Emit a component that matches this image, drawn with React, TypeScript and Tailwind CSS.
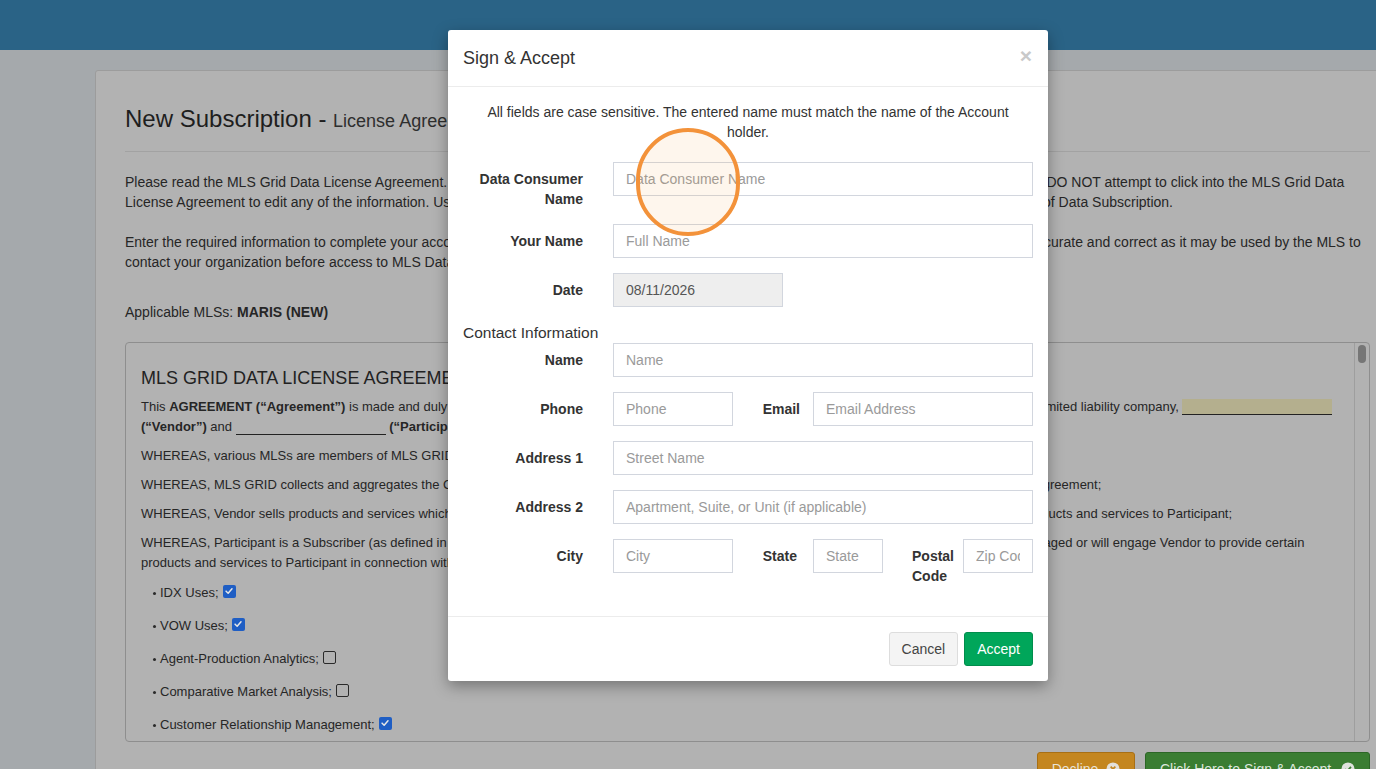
import React from 'react'

function Box({ checked }: { checked: boolean }) {
  if (checked) {
    return (
      <span className="ml-[4px] inline-flex h-[13px] w-[13px] translate-y-[-2px] items-center justify-center rounded-[2px] bg-[#1f5ec4]">
        <svg viewBox="0 0 12 12" className="h-[10px] w-[10px]">
          <path d="M2.5 6.2 L5 8.6 L9.6 3.4" fill="none" stroke="#e6e6e6" strokeWidth="1.8" strokeLinecap="round" strokeLinejoin="round" />
        </svg>
      </span>
    )
  }
  return <span className="ml-[4px] inline-block h-[13px] w-[13px] translate-y-[-2px] rounded-[2px] border border-[#2a2a2a]" />
}

function Use({ label, checked }: { label: string; checked: boolean }) {
  return (
    <div className="mb-[13px] flex items-center pl-[12px] leading-[20px]">
      <span className="mr-[4px] inline-block h-[3px] w-[3px] rounded-full bg-[#2a2a2a]" />
      <span>{label}</span>
      <Box checked={checked} />
    </div>
  )
}

const inputCls =
  "h-[34px] min-w-0 border border-[#d2d6de] px-[12px] text-[14px] text-[#555] outline-none placeholder:text-[#9a9a9a]"

function Row({ label, children }: { label: string; children: React.ReactNode }) {
  return (
    <div className="mb-[15px] flex">
      <label className="w-[135px] shrink-0 pr-[15px] pt-[7px] text-right font-bold leading-[20px] text-[#333]">{label}</label>
      <div className="flex flex-1 pl-[15px]">{children}</div>
    </div>
  )
}

export default function App() {
  return (
    <div className="relative h-[769px] w-[1376px] overflow-hidden bg-[#a5a9ac] font-['Liberation_Sans',Arial,sans-serif] text-[14px] text-[#262626]">
      <div className="h-[50px] bg-[#2a6386]" />

      {/* page card, dimmed by the modal backdrop */}
      <div className="ml-[95px] mt-[20px] w-[1305px] rounded-[3px] border border-[#9c9c9c] bg-[#b2b2b2] px-[29px] pt-[35px]">
        <h1 className="text-[24px] leading-[26px] text-[#1e1e1e]">
          New Subscription - <small className="text-[18px] text-[#2e2e2e]">License Agreement</small>
        </h1>
        <div className="mt-[17px] border-t border-[#a2a2a2]" />

        <p className="mt-[20px] leading-[20px]">
          Please read the MLS Grid Data License Agreement. Check the boxes that apply to your organization use of the data, and sign the Agreement below. DO NOT attempt to click into the MLS Grid Data
          <br />
          License Agreement to edit any of the information. Use the Sign &amp; Accept button below to agree to the MLS Grid Data License Agreement and Terms of Data Subscription.
        </p>
        <p className="mt-[20px] leading-[20px]">
          Enter the required information to complete your account signature. Please make sure that all of the business contact information you enter here is accurate and correct as it may be used by the MLS to
          <br />
          contact your organization before access to MLS Data is granted.
        </p>
        <p className="mt-[30px] leading-[20px]">
          Applicable MLSs: <b>MARIS (NEW)</b>
        </p>

        <div className="mt-[20px] flex h-[400px] overflow-hidden rounded-[4px] border border-[#8e8e8e]">
          <div className="flex-1 overflow-hidden pl-[15px] pr-[10px] pt-[23px] text-[13px]">
            <h2 className="mb-[7px] text-[18px] leading-[24px] text-[#222]">MLS GRID DATA LICENSE AGREEMENT</h2>
            <p className="mb-[9px] leading-[20px]">
              This <b>AGREEMENT (“Agreement”)</b> is made and duly entered into as of the Effective Date first set forth below by and between MLS GRID, LLC, a Delaware limited liability company,{' '}
              <span className="inline-block h-[16px] w-[150px] translate-y-[2px] border-b border-[#222] bg-[#b4af8e] align-top" />
              <br />
              <b>(“Vendor”)</b> and <span className="inline-block h-[16px] w-[150px] translate-y-[2px] border-b border-[#222] align-top" /> <b>(“Participant”)</b>.
            </p>
            <p className="mb-[9px] leading-[20px]">WHEREAS, various MLSs are members of MLS GRID and have authorized it to license their data;</p>
            <p className="mb-[9px] leading-[20px]">
              WHEREAS, MLS GRID collects and aggregates the Compilations of those MLSs and makes them available to licensed vendors and participants under this Agreement;
            </p>
            <p className="mb-[9px] leading-[20px]">
              WHEREAS, Vendor sells products and services which make use of the MLS Data licensed by MLS Grid and desire to use the MLS Data to provide those products and services to Participant;
            </p>
            <p className="mb-[10px] leading-[20px]">
              WHEREAS, Participant is a Subscriber (as defined in Section 1 below) of one or more of the MLSs that were members of MLS GRID and Participant has engaged or will engage Vendor to provide certain
              <br />
              products and services to Participant in connection with the following uses:
            </p>
            <Use label="IDX Uses;" checked />
            <Use label="VOW Uses;" checked />
            <Use label="Agent-Production Analytics;" checked={false} />
            <Use label="Comparative Market Analysis;" checked={false} />
            <Use label="Customer Relationship Management;" checked />
          </div>
          <div className="w-[15px] border-l border-[#9e9e9e] pt-[2px]">
            <div className="mx-auto h-[18px] w-[8px] rounded-full bg-[#767676]" />
          </div>
        </div>

        <div className="mt-[10px] flex justify-end gap-[10px]">
          <button className="flex h-[34px] w-[98px] items-center justify-center gap-[8px] rounded-[3px] border border-[#a86f14] bg-[#c4861f] text-[#e8e2d6]">
            Decline
            <svg viewBox="0 0 16 16" className="h-[14px] w-[14px]">
              <circle cx="8" cy="8" r="7.5" fill="#e3e0da" />
              <path d="M5.3 5.3 L10.7 10.7 M10.7 5.3 L5.3 10.7" stroke="#c4861f" strokeWidth="2" />
            </svg>
          </button>
          <button className="flex h-[34px] w-[225px] items-center justify-center gap-[10px] rounded-[3px] border border-[#2c6626] bg-[#3a7d32] text-[#dde6dc]">
            Click Here to Sign &amp; Accept
            <svg viewBox="0 0 16 16" className="h-[14px] w-[14px]">
              <circle cx="8" cy="8" r="7.5" fill="#dfe3de" />
              <path d="M4.6 8.2 L7 10.5 L11.4 5.6" fill="none" stroke="#3a7d32" strokeWidth="2" />
            </svg>
          </button>
        </div>
      </div>

      {/* modal */}
      <div className="absolute left-[448px] top-[30px] w-[600px] rounded-[3px] bg-white shadow-[0_5px_15px_rgba(0,0,0,0.35)]">
        <div className="flex items-center justify-between border-b border-[#ececec] p-[15px]">
          <h4 className="text-[18px] leading-[26px] text-[#333]">Sign &amp; Accept</h4>
          <span className="mr-[1px] mt-[-6px] text-[21px] font-bold leading-none text-[#c9c9c9]">×</span>
        </div>
        <div className="p-[15px]">
          <p className="mb-[20px] px-[7px] text-center leading-[20px] text-[#333]">
            All fields are case sensitive. The entered name must match the name of the Account holder.
          </p>
          <Row label="Data Consumer Name">
            <input className={`${inputCls} w-full bg-white`} placeholder="Data Consumer Name" />
          </Row>
          <Row label="Your Name">
            <input className={`${inputCls} w-full bg-white`} placeholder="Full Name" />
          </Row>
          <Row label="Date">
            <input className={`${inputCls} w-[170px] bg-[#eeeeee]`} value="08/11/2026" readOnly />
          </Row>
          <div className="text-[15.5px] leading-[21px] text-[#333]">Contact Information</div>
          <Row label="Name">
            <input className={`${inputCls} w-full bg-white`} placeholder="Name" />
          </Row>
          <Row label="Phone">
            <input className={`${inputCls} w-[120px] bg-white`} placeholder="Phone" />
            <label className="w-[80px] shrink-0 pr-[13px] pt-[7px] text-right font-bold leading-[20px] text-[#333]">Email</label>
            <input className={`${inputCls} flex-1 bg-white`} placeholder="Email Address" />
          </Row>
          <Row label="Address 1">
            <input className={`${inputCls} w-full bg-white`} placeholder="Street Name" />
          </Row>
          <Row label="Address 2">
            <input className={`${inputCls} w-full bg-white`} placeholder="Apartment, Suite, or Unit (if applicable)" />
          </Row>
          <Row label="City">
            <input className={`${inputCls} w-[120px] bg-white`} placeholder="City" />
            <label className="w-[80px] shrink-0 pr-[16px] pt-[7px] text-right font-bold leading-[20px] text-[#333]">State</label>
            <input className={`${inputCls} w-[70px] bg-white`} placeholder="State" />
            <label className="w-[80px] shrink-0 pl-[29px] pt-[7px] font-bold leading-[20px] text-[#333]">Postal Code</label>
            <input className={`${inputCls} w-[70px] bg-white`} placeholder="Zip Code" />
          </Row>
        </div>
        <div className="flex justify-end gap-[6px] border-t border-[#ececec] p-[15px]">
          <button className="h-[34px] rounded-[3px] border border-[#dddddd] bg-[#f4f4f4] px-[12px] text-[#444]">Cancel</button>
          <button className="h-[34px] rounded-[3px] border border-[#008d4c] bg-[#00a65a] px-[12px] text-white">Accept</button>
        </div>
      </div>

      {/* click marker */}
      <div className="pointer-events-none absolute left-[636px] top-[128px] h-[108px] w-[104px] rounded-full border-[4px] border-[#f3923a] bg-[#f7a24a]/10" />
    </div>
  )
}
